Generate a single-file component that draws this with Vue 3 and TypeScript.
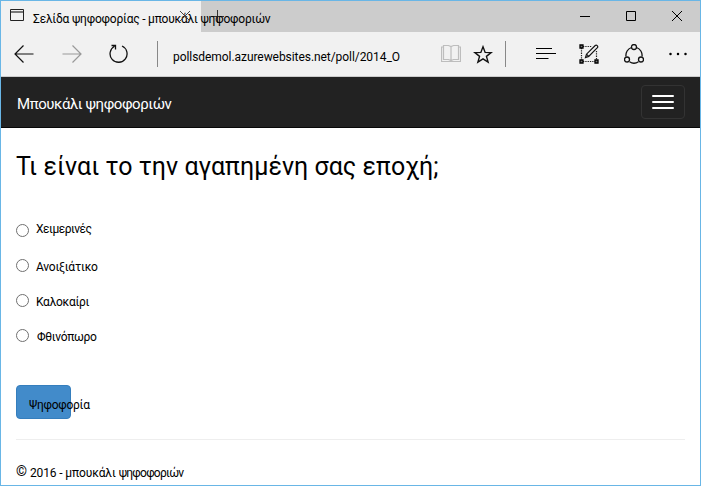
<script setup lang="ts">
import { ref } from 'vue'

interface Option {
  id: string
  label: string
}

const options: Option[] = [
  { id: 'winter', label: 'Χειμερινές' },
  { id: 'spring', label: 'Ανοιξιάτικο' },
  { id: 'summer', label: 'Καλοκαίρι' },
  { id: 'autumn', label: 'Φθινόπωρο' },
]
const selected = ref('')
</script>

<template>
  <div class="window">
    <header class="titlebar">
      <div class="tab">
        <svg class="page-icon" width="14" height="12" viewBox="0 0 14 12" fill="none">
          <path d="M.5.5h13v11H.5z" stroke="#222" />
          <path d="M1 3h12" stroke="#777" stroke-width="2" />
        </svg>
        <span class="tab-title">Σελίδα ψηφοφορίας - μπουκάλι ψηφοφοριών</span>
        <svg class="tab-close" width="10" height="10" viewBox="0 0 10 10" stroke="#444"><path d="M0 0l10 10M10 0L0 10" /></svg>
      </div>
      <svg class="new-tab" width="13" height="13" viewBox="0 0 13 13" stroke="#333"><path d="M6.500 0v13M0 6.500h13" /></svg>
      <div class="controls">
        <svg width="10" height="10" viewBox="0 0 10 10" stroke="#000"><path d="M0 5.500h10" /></svg>
        <svg width="10" height="10" viewBox="0 0 10 10" stroke="#000" fill="none"><path d="M.5.5h9v9h-9z" /></svg>
        <svg width="10" height="10" viewBox="0 0 10 10" stroke="#000"><path d="M0 0l10 10M10 0L0 10" /></svg>
      </div>
    </header>

    <div class="toolbar">
      <svg class="back" width="20" height="18" viewBox="0 0 20 18" fill="none" stroke="#111" stroke-width="1.2"><path d="M9.500.5L1 9l8.500 8.500M1 9h18.500" /></svg>
      <svg class="forward" width="20" height="18" viewBox="0 0 20 18" fill="none" stroke="#999" stroke-width="1.200"><path d="M10.500.5L19 9l-8.500 8.500M19 9H.5" /></svg>
      <svg class="reload" width="20" height="20" viewBox="0 0 20 20" fill="none" stroke="#111" stroke-width="1.300"><path d="M13 2a8.500 8.500 0 1 1-7.500.3M2.500 1.500h4v4" /></svg>
      <i class="divider first"></i>
      <span class="url">pollsdemol.azurewebsites.net/poll/2014_O</span>
      <svg class="book" width="20" height="19" viewBox="0 0 20 19" fill="none" stroke="#bdbdbd" stroke-width="1.200">
        <path d="M2.500 1.500h5L10 2.500l2.500-1h5v14h-5L10 16.500l-2.500-1h-5zM10 2.500v15M2.500 3h-2v14.500h19V3h-2" />
      </svg>
      <svg class="star" width="20" height="20" viewBox="0 0 20 20" fill="none" stroke="#111" stroke-width="1.400"><path d="M10 1.800l2.150 5.600 6 .25-4.700 3.700 1.650 5.800L10 13.800l-5.100 3.350 1.650-5.800-4.700-3.700 6-.25z" /></svg>
      <i class="divider second"></i>
      <svg class="hub" width="20" height="12" viewBox="0 0 20 12" stroke="#000"><path d="M0 .5h16M0 5.500h20M0 10.500h12.500" /></svg>
      <svg class="note" width="20" height="20" viewBox="0 0 20 20" fill="none">
        <path d="M4 2.500h9M2.500 4v12M4 17.500h12M17.500 7v9" stroke="#222" stroke-width="1.200" stroke-dasharray="1.300 1" />
        <path d="M1 1h3v3H1zM1 16h3v3H1zM16 16h3v3h-3z" fill="#777" stroke="#000" stroke-width="1.300" />
        <path d="M6.500 13.500l1-3.300L16.200 1.500q1-.8 2 .1t.2 2L9.700 12.400zM7.500 10.200l2.200 2.200" stroke="#111" stroke-width="1.200" />
      </svg>
      <svg class="share" width="20" height="20" viewBox="0 0 20 20" fill="none" stroke="#111" stroke-width="1.300">
        <path d="M7.500 3.500A8.200 8.200 0 0 0 2 12.500M12.500 3.500a8.200 8.200 0 0 1 5.500 9M5.500 17.800a8.400 8.400 0 0 0 9 0" />
        <circle cx="10" cy="3" r="2.500" /><circle cx="3" cy="15.500" r="2.500" /><circle cx="17" cy="15.500" r="2.500" />
      </svg>
      <svg class="more" width="18" height="4" viewBox="0 0 18 4"><circle cx="1.500" cy="2" r="1.250" /><circle cx="9" cy="2" r="1.250" /><circle cx="16.500" cy="2" r="1.250" /></svg>
    </div>

    <nav class="navbar">
      <span class="brand">Μπουκάλι ψηφοφοριών</span>
      <button class="toggle" type="button"><i></i><i></i><i></i></button>
    </nav>

    <main class="content">
      <h1><span class="heading-text">Τι είναι το την αγαπημένη σας εποχή;</span></h1>
      <form @submit.prevent>
        <label v-for="option in options" :key="option.id" class="option" :class="option.id">
          <input v-model="selected" type="radio" name="season" :value="option.id" />
          <span>{{ option.label }}</span>
        </label>
        <button class="vote" type="submit"><span>Ψηφοφορία</span></button>
      </form>
      <footer><span class="copy">©</span><span class="year">2016 - μπουκάλι</span><span class="tail">ψηφοφοριών</span></footer>
    </main>
  </div>
</template>

<style>
body { overflow: hidden; }
</style>

<style scoped>
.window {
  box-sizing: border-box;
  width: 701px;
  height: 486px;
  border: 1px solid #69b6e6;
  background: #fff;
  color: #000;
  font-family: Roboto, "Liberation Sans", sans-serif;
  font-size: 12px;
  overflow: hidden;
}
svg { display: block; flex: none; }
span { white-space: nowrap; }
.titlebar { display: flex; height: 31px; background: #ccc; }
.tab {
  box-sizing: border-box;
  position: relative;
  z-index: 1;
  flex: none;
  display: flex;
  width: 200px;
  padding-left: 9px;
  background: #f1f1f1;
}
.page-icon { margin-top: 8px; }
.tab-title { margin: 10px 0 0 9px; line-height: 16px; letter-spacing: -0.22px; }
.tab-close { position: absolute; left: 179px; top: 10px; }
.new-tab { margin: 9px 0 0 10px; }
.controls { display: flex; gap: 36px; margin: 10px 18px 0 auto; }
.toolbar { display: flex; height: 44px; background: #f1f1f1; border-bottom: 1px solid #ccc; }
.back { margin: 13px 0 0 13px; }
.forward { margin: 13px 0 0 28px; }
.reload { margin: 12px 0 0 27px; }
.divider { flex: none; width: 1px; height: 26px; margin-top: 9px; background: #888; }
.first { margin-left: 28px; }
.url { width: 268px; margin: 17px 0 0 15px; line-height: 16px; letter-spacing: -0.06px; }
.book { margin-top: 12px; }
.star { margin: 13px 0 0 12px; }
.second { margin-left: 12px; }
.hub { margin: 16px 0 0 30px; }
.note { margin: 12px 0 0 23px; }
.share { margin: 12px 0 0 25px; }
.more { margin: 20px 0 0 25px; }
.navbar {
  box-sizing: border-box;
  display: flex;
  justify-content: space-between;
  height: 51px;
  padding: 8px 15px 0 16px;
  background: #222;
  border-bottom: 1px solid #080808;
}
.brand { color: #fff; font-size: 15px; line-height: 38px; letter-spacing: -0.44px; }
.toggle {
  box-sizing: border-box;
  display: flex;
  flex-direction: column;
  gap: 4px;
  width: 44px;
  height: 34px;
  padding: 9px 10px;
  border: 1px solid #333;
  border-radius: 4px;
  background: transparent;
}
.toggle i { width: 22px; height: 2px; border-radius: 1px; background: #fff; }
.content { padding: 22px 15px 0; }
h1 { margin: 0; height: 70px; font-size: 25px; font-weight: 400; line-height: 34px; letter-spacing: 0.02px; }
.option { display: flex; align-items: flex-start; height: 35px; }
.option input {
  box-sizing: border-box;
  flex: none;
  width: 13px;
  height: 13px;
  margin: 4px 7px 0 0;
  appearance: none;
  border: 1px solid #707070;
  border-radius: 50%;
  background: #fff;
}
.option input:checked { background: #333; box-shadow: inset 0 0 0 2px #fff; }
.option span { margin-top: 4px; line-height: 16px; letter-spacing: -0.22px; }
.winter span { margin-top: 1px; letter-spacing: -0.48px; }
.summer span { letter-spacing: -0.3px; }
.autumn span { margin-left: 1px; letter-spacing: -0.3px; }
.vote {
  box-sizing: border-box;
  display: flex;
  width: 55px;
  height: 34px;
  margin: 25px 0 0;
  padding: 11px 0 0 12px;
  border: 1px solid #357ebd;
  border-radius: 4px;
  background: #428bca;
  color: #000;
  font: inherit;
  line-height: 16px;
  letter-spacing: -0.27px;
}
footer { display: flex; margin-top: 20px; padding-top: 25px; border-top: 1px solid #eee; line-height: 16px; }
.copy { margin-top: -2px; font-size: 14px; }
.year { margin-left: 3px; letter-spacing: -0.13px; }
.tail { margin-left: 3px; letter-spacing: -0.75px; }
</style>
